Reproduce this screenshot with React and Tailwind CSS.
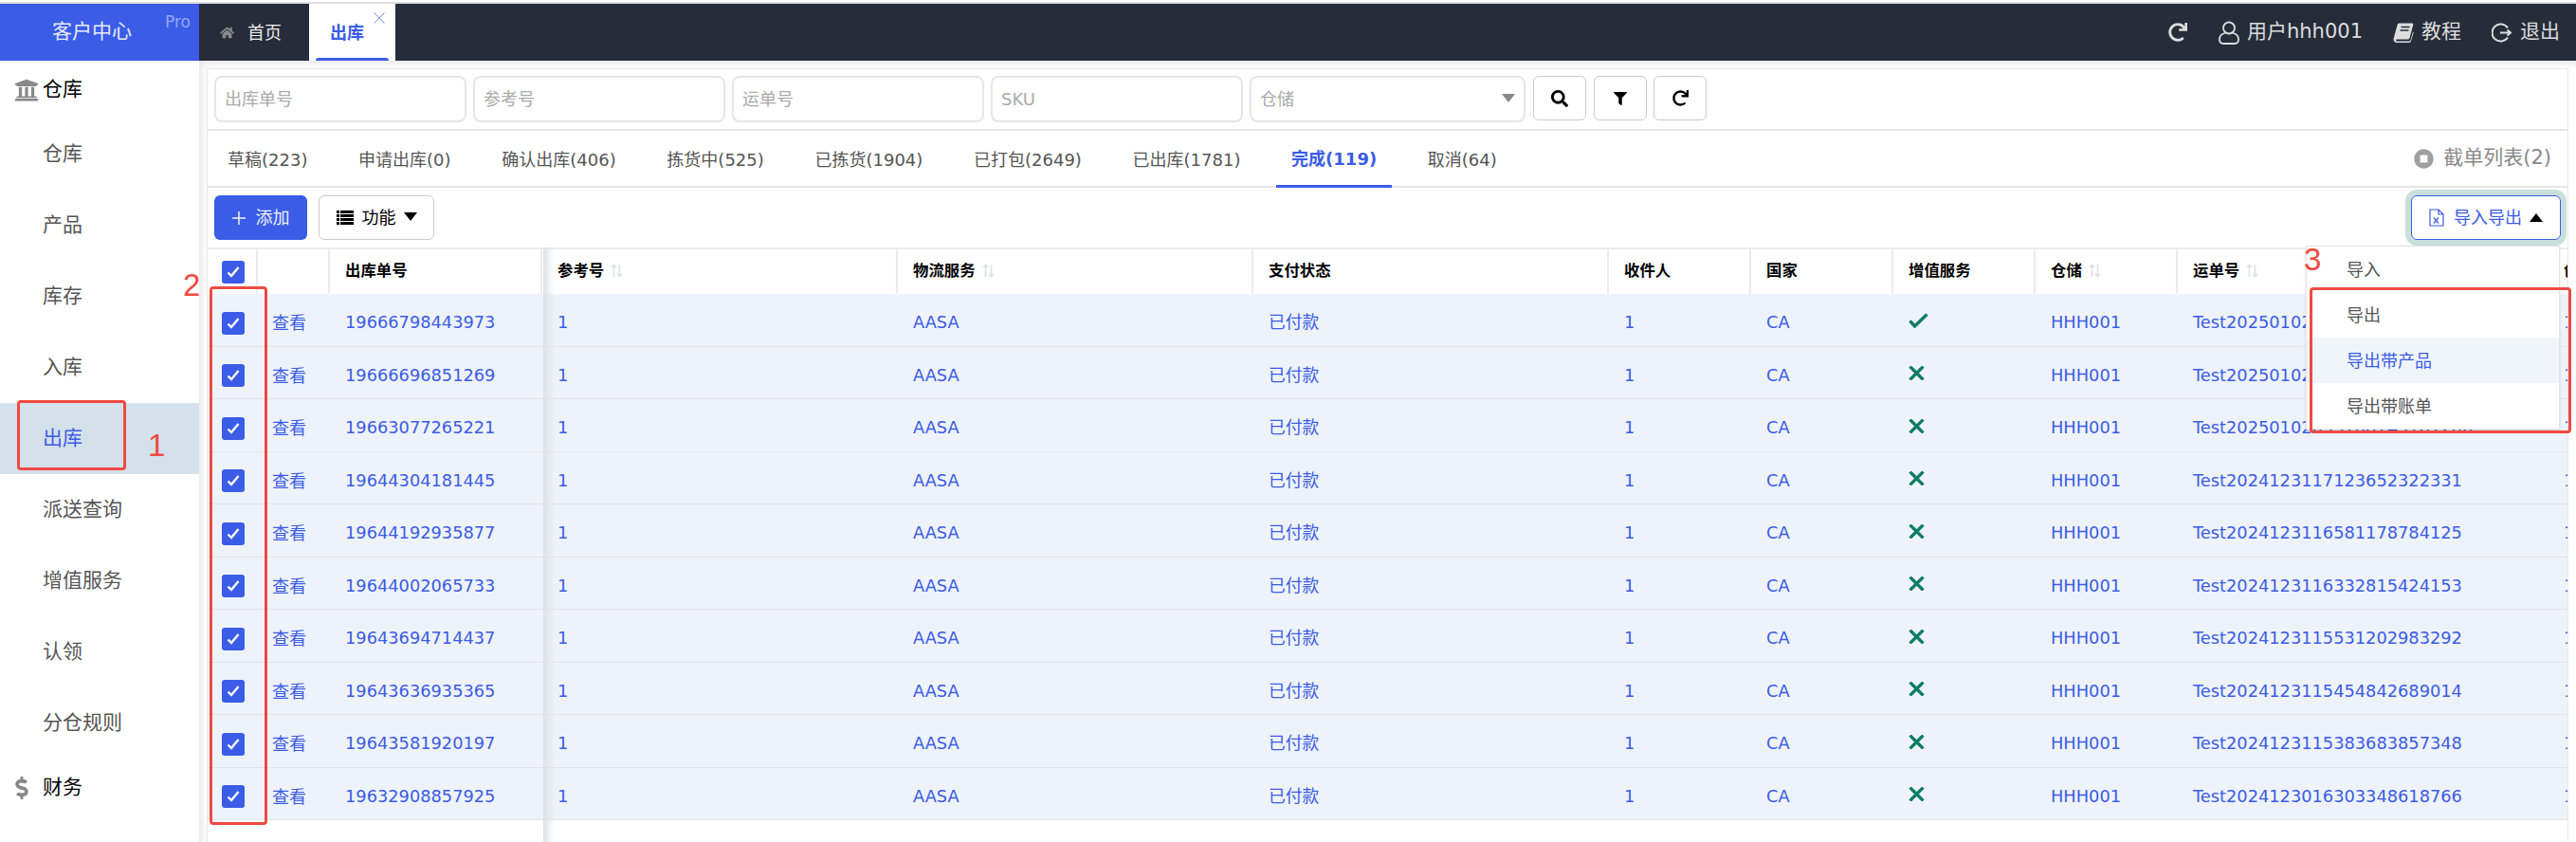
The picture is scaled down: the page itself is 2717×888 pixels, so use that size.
import React from "react";
import { FaUniversity, FaDollarSign, FaHome, FaSearch, FaFilter, FaRedo, FaStopCircle } from "react-icons/fa";

const rows = [
  ["19666798443973", "Test20250102053708498461200", true],
  ["19666696851269", "Test20250102051708478461269", false],
  ["19663077265221", "Test20250102053708749181200", false],
  ["19644304181445", "Test2024123117123652322331", false],
  ["19644192935877", "Test2024123116581178784125", false],
  ["19644002065733", "Test2024123116332815424153", false],
  ["19643694714437", "Test2024123115531202983292", false],
  ["19643636935365", "Test2024123115454842689014", false],
  ["19643581920197", "Test2024123115383683857348", false],
  ["19632908857925", "Test2024123016303348618766", false],
];

const menu = ["仓库", "产品", "库存", "入库", "出库", "派送查询", "增值服务", "认领", "分仓规则"];
const tabs = ["草稿(223)", "申请出库(0)", "确认出库(406)", "拣货中(525)", "已拣货(1904)", "已打包(2649)", "已出库(1781)", "完成(119)", "取消(64)"];

function Tri({ up, fill = "#000", className = "" }) {
  return (
    <svg width="14" height="9" viewBox="0 0 14 9" fill={fill} className={className}>
      <path d={up ? "M7 0l7 9H0z" : "M0 0h14L7 9z"} />
    </svg>
  );
}

function Sort() {
  return (
    <svg width="13" height="15" viewBox="0 0 13 15" fill="none" stroke="#dfe1e4" strokeWidth="1.6" className="ml-[7px] -mt-[3px] shrink-0">
      <path d="M3.5 14V1.5M1 4l2.5-2.500L6 4" />
      <path d="M9.5 1v12.500M7 11l2.500 2.500L12 11" />
    </svg>
  );
}

function Check() {
  return (
    <span className="flex h-6 w-6 items-center justify-center rounded-[3px] bg-[#3b5ce6]">
      <svg width="16" height="16" viewBox="0 0 16 16" fill="none" stroke="#fff" strokeWidth="2.4">
        <path d="M2.5 8.5l3.5 3.500 7.500-9" />
      </svg>
    </span>
  );
}

function Head({ w, children, sort, last }) {
  return (
    <div className={`flex h-full shrink-0 items-center pl-4 text-[16.4px] font-bold text-black ${last ? "" : "border-r-2 border-[#ebebeb]"} ${w}`}>
      <span className="whitespace-nowrap">{children}</span>
      {sort && <Sort />}
    </div>
  );
}

function Cell({ w, children }) {
  return (
    <div className={`flex h-full shrink-0 items-center whitespace-nowrap pl-4 pt-[7px] ${w}`}>{children}</div>
  );
}

function Field({ ph }) {
  return (
    <input
      readOnly
      placeholder={ph}
      className="h-[49px] w-[266px] rounded-lg border-2 border-[#e6e6e6] bg-white pl-[9px] text-[18px] outline-none placeholder:text-[#aaaaaa]"
    />
  );
}

function IconBtn({ children }) {
  return (
    <button className="flex h-[47px] w-14 items-center justify-center rounded-md border border-[#cccccc] bg-white text-[18px] text-black">
      {children}
    </button>
  );
}

export default function App() {
  return (
    <div className="relative h-[888px] w-[2717px] overflow-hidden bg-white font-['DejaVu_Sans','Noto_Sans_CJK_SC',sans-serif] text-[17.8px]">
      <div className="h-1 border-b-2 border-[#dddddd] bg-white" />

      <header className="flex h-[60px] bg-[#262c39]">
        <div className="relative flex w-[210px] items-center bg-[#3b5ce6] pl-[55px] text-[21px] text-[#e6eafc]">
          客户中心
          <span className="absolute left-[174px] top-[7px] text-[17px] text-[#93a6f2]">Pro</span>
        </div>
        <div className="flex w-[116px] items-center pl-[22px] text-[18px] text-[#eeeeee]">
          <FaHome className="mr-[14px] text-[15px] text-[#8a8a8a]" />
          首页
        </div>
        <div className="relative flex w-[91px] items-center bg-white pl-[22px] text-[18px] font-bold text-[#3b5ce6]">
          出库
          <svg width="12" height="12" viewBox="0 0 12 12" stroke="#7f93ee" strokeWidth="1" className="absolute left-[68px] top-[9px]">
            <path d="M0.5 0.5l11 11M11.5 0.5l-11 11" />
          </svg>
          <span className="absolute bottom-0 left-[7px] h-[3px] w-[77px] rounded-t-sm bg-[#3b5ce6]" />
        </div>
        <div className="flex flex-1 items-center justify-end pr-[17px] text-[21px] text-[#dddddd]">
          <FaRedo className="text-[20px]" />
          <svg width="22" height="25" viewBox="0 0 22 25" fill="none" stroke="#dddddd" strokeWidth="1.8" className="ml-[33px] mr-2">
            <circle cx="11" cy="7.5" r="6" />
            <path d="M7.500 12.500C3.500 13.500 1 15.500 1 19.500c0 2.500 1.500 4.500 4 4.500h12c2.500 0 4-2 4-4.500 0-4-2.500-6-6.500-7" />
          </svg>
          <span>用户hhh001</span>
          <svg width="22" height="21" viewBox="0 0 22 21" className="ml-8 mr-2">
            <path fill="#dddddd" d="M6.500 0.500H20c1 0 1.500 0.800 1.200 2L17.500 16c-0.300 1-1 1.500-2 1.500H4.500c-1.800 0-1.800 2 0 2H17c0.800 0 1.200-0.500 1.500-1.300L21 9.500l0.800 0.800-3 9.500c-0.200 0.700-0.800 1.200-1.600 1.200H4c-2.500 0-4-2-3.300-4.500L4.500 2.500C4.800 1.200 5.500 0.500 6.500 0.500z" />
            <path stroke="#262c39" strokeWidth="1.400" fill="none" d="M8.500 4.500h9M7.500 8h9" />
          </svg>
          <span>教程</span>
          <svg width="21" height="21" viewBox="0 0 21 21" fill="none" stroke="#dddddd" strokeWidth="2" className="ml-8 mr-[9px]">
            <path d="M17 5.500A9 9 0 1 0 17 15.500" />
            <path d="M9 10.500h11M16.500 7.500l3.500 3-3.500 3" />
          </svg>
          <span>退出</span>
        </div>
      </header>

      <div className="flex h-[824px]">
        <aside className="w-[210px] shrink-0 bg-white text-[21px] text-[#555555]">
          <div className="flex h-[61px] items-center pl-[15px] text-black">
            <FaUniversity className="mr-[4px] text-[26px] text-[#888888]" />
            仓库
          </div>
          {menu.map((m) => (
            <div
              key={m}
              className={`flex h-[75px] items-center pl-[45px] ${m === "出库" ? "bg-[#d5e1ea] text-[#3b5ce6]" : ""}`}
            >
              {m}
            </div>
          ))}
          <div className="flex h-[62px] items-center pl-[11px] text-black">
            <FaDollarSign className="mr-[10px] text-[24px] text-[#888888]" />
            财务
          </div>
        </aside>

        <main className="min-w-0 flex-1 pl-2 pr-2 pt-2 shadow-[inset_9px_9px_8px_-7px_rgba(0,0,0,0.12)]">
          <div className="flex h-[816px] flex-col border border-b-0 border-[#e8e8e8] bg-white">
            <div className="flex h-[65px] shrink-0 items-start border-b-2 border-[#e6e6e6] pl-[7px] pt-[7px]">
              <div className="flex gap-[7px]">
                <Field ph="出库单号" />
                <Field ph="参考号" />
                <Field ph="运单号" />
                <Field ph="SKU" />
                <div className="flex h-[49px] w-[291px] items-center justify-between rounded-lg border-2 border-[#e6e6e6] pl-[9px] pr-[9px] text-[18px] text-[#aaaaaa]">
                  仓储
                  <Tri fill="#888888" className="-mt-[2px]" />
                </div>
              </div>
              <div className="ml-[8px] flex gap-[7.5px]">
                <IconBtn><FaSearch /></IconBtn>
                <IconBtn><FaFilter className="text-[14px]" /></IconBtn>
                <IconBtn><FaRedo className="text-[17px]" /></IconBtn>
              </div>
            </div>

            <div className="flex h-[60px] shrink-0 items-stretch justify-between border-b-2 border-[#e6e6e6] pl-[5px] pr-[17px]">
              <div className="flex gap-[21.7px] text-[18px]">
                {tabs.map((t) => (
                  <div
                    key={t}
                    className={`flex items-center whitespace-nowrap px-4 pt-[2px] ${t.startsWith("完成") ? "-mb-[2px] border-b-[3px] border-[#3b5ce6] font-bold text-[#3b5ce6]" : "text-[#555555]"}`}
                  >
                    {t}
                  </div>
                ))}
              </div>
              <div className="flex items-center text-[21px] text-[#888888]">
                <FaStopCircle className="mr-[10px] text-[21px] text-[#a0a0a0]" />
                截单列表(2)
              </div>
            </div>

            <div className="flex h-[63px] shrink-0 items-start justify-between pl-[7px] pr-[7px] pt-2">
              <div className="flex gap-3 text-[18px]">
                <button className="flex h-[47px] w-[98px] items-center justify-center gap-[11px] rounded-md bg-[#3b5ce6] text-[#f0f3ff]">
                  <svg width="14" height="14" viewBox="0 0 14 14" stroke="#f0f3ff" strokeWidth="1.500">
                    <path d="M7 0v14M0 7h14" />
                  </svg>
                  添加
                </button>
                <button className="flex h-[47px] w-[122px] items-center justify-center rounded-md border border-[#cccccc] text-black">
                  <svg width="18" height="15" viewBox="0 0 18 15" fill="#000" className="mr-[9px]">
                    <path d="M0 0h3v3H0zM4 0h14v3H4zM0 4h3v3H0zM4 4h14v3H4zM0 8h3v3H0zM4 8h14v3H4zM0 12h3v3H0zM4 12h14v3H4z" />
                  </svg>
                  功能
                  <Tri className="ml-2 -mt-[2px]" />
                </button>
              </div>
              <button className="flex h-[47px] w-[158px] items-center justify-center rounded-md border border-[#3b5ce6] text-[18px] text-[#3b5ce6] ring-[6px] ring-[#c9dfdc]">
                <svg width="16" height="19" viewBox="0 0 16 19" fill="none" stroke="#3b5ce6" strokeWidth="1.200" className="mr-[10px]">
                  <path d="M1 1h9l5 5v12H1zM10 1v5h5" />
                  <path d="M5 9.500l5 6M10 9.500l-5 6" />
                </svg>
                导入导出
                <Tri up className="ml-[8px]" />
              </button>
            </div>

            <div className="relative min-h-0 flex-1 overflow-hidden">
              <div className="flex h-[49px] w-[2700px] border-t-2 border-[#ebebeb]">
                <div className="flex h-full w-[53px] shrink-0 items-center border-r-2 border-[#ebebeb] pl-[15px]"><Check /></div>
                <div className="h-full w-[76px] shrink-0 border-r-2 border-[#ebebeb]" />
                <Head w="w-[224px]">出库单号</Head>
                <Head w="w-[375px]" sort>参考号</Head>
                <Head w="w-[375px]" sort>物流服务</Head>
                <Head w="w-[375px]">支付状态</Head>
                <Head w="w-[150px]">收件人</Head>
                <Head w="w-[150px]">国家</Head>
                <Head w="w-[150px]">增值服务</Head>
                <Head w="w-[150px]" sort>仓储</Head>
                <Head w="w-[391px]" sort last>运单号</Head>
                <Head w="w-[200px]" last>创建时间</Head>
              </div>
              {rows.map(([no, track, ok]) => (
                <div key={no} className="flex h-[55.5px] w-[2700px] border-b border-[#e2e4e8] bg-[#eef3fb] text-[#3b5ce6]">
                  <div className="flex h-full w-[53px] shrink-0 items-center pl-[15px] pt-[7px]"><Check /></div>
                  <div className="flex h-full w-[76px] shrink-0 items-center pl-[15px] pt-[7px] text-[18px]">查看</div>
                  <Cell w="w-[224px]">{no}</Cell>
                  <Cell w="w-[375px]">1</Cell>
                  <Cell w="w-[375px]">AASA</Cell>
                  <Cell w="w-[375px]">已付款</Cell>
                  <Cell w="w-[150px]">1</Cell>
                  <Cell w="w-[150px]">CA</Cell>
                  <Cell w="w-[150px]">
                    {ok ? (
                      <svg width="21" height="16" viewBox="0 0 21 16" fill="none" stroke="#0e7c66" strokeWidth="3.4" className="-mt-[6px]">
                        <path d="M1.500 8.500l5 5.500L19.500 1.500" />
                      </svg>
                    ) : (
                      <svg width="17" height="15" viewBox="0 0 17 15" fill="none" stroke="#0e7c66" strokeWidth="3.300" className="-mt-[5px]">
                        <path d="M1.500 0.500l14 14M15.500 0.500l-14 14" />
                      </svg>
                    )}
                  </Cell>
                  <Cell w="w-[150px]">HHH001</Cell>
                  <Cell w="w-[391px]">{track}</Cell>
                  <Cell w="w-[200px]">1</Cell>
                </div>
              ))}
              <div className="absolute bottom-0 left-[354px] top-0 w-[12px] bg-gradient-to-r from-[#dde1e6] to-transparent" />
            </div>
          </div>
        </main>
      </div>

      <div className="absolute left-[2432px] top-[259px] w-[268px] border border-[#e4e4e4] bg-white text-[18px] text-[#555555] shadow-sm">
        <div className="flex h-12 items-center pl-[42px]">导入</div>
        <div className="flex h-12 items-center pl-[42px]">导出</div>
        <div className="flex h-12 items-center bg-[#eff5fb] pl-[42px] text-[#3b5ce6]">导出带产品</div>
        <div className="flex h-12 items-center pl-[42px]">导出带账单</div>
      </div>

      <div className="absolute left-[18px] top-[422px] h-[74px] w-[115px] rounded border-[3.5px] border-[#f04a42]" />
      <div className="absolute left-[221px] top-[302px] h-[568px] w-[61px] rounded border-[3.5px] border-[#f04a42]" />
      <div className="absolute left-[2436px] top-[303px] h-[154px] w-[276px] rounded border-[3.5px] border-[#f04a42]" />
      <span className="absolute left-[156px] top-[451px] font-['Liberation_Sans',sans-serif] text-[33px] leading-[38px] text-[#f04a42]">1</span>
      <span className="absolute left-[193px] top-[282px] font-['Liberation_Sans',sans-serif] text-[33px] leading-[38px] text-[#f04a42]">2</span>
      <span className="absolute left-[2430px] top-[255px] font-['Liberation_Sans',sans-serif] text-[33px] leading-[38px] text-[#f04a42]">3</span>
    </div>
  );
}
